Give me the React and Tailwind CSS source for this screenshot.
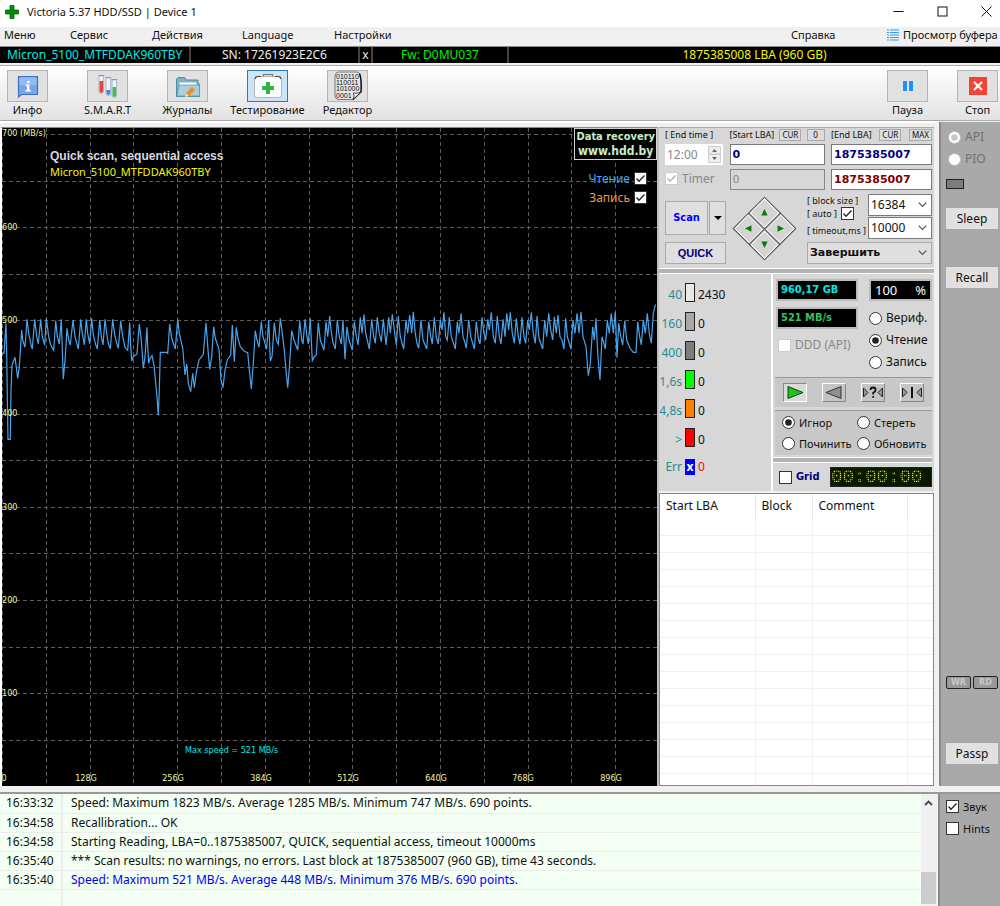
import { useState } from 'react';
import clsx from 'clsx';

// Speed trace, stored as x,y pairs in thirds of a pixel
const TRACE_LEFT =
  '7,190 12,190 18,100 20,190 22,320 24,448 31,448 33,300 36,225 45,202 48,225 53,265 58,230 65,120 68,150 75,172 81,88 86,130 92,160 97,177 104,88 110,140 115,162 122,88 127,140 134,165 139,85 146,140 152,165 161,181 167,92 172,140 178,162 184,88 187,180 190,268 196,200 201,115 206,150 211,165 219,90 225,140 235,177 242,88 247,130 253,165 259,88 263,130 269,162 275,85 280,135 286,160 292,177 299,90 304,140 309,165 315,88 320,130 325,160 331,177 338,88 344,135 350,160 355,175 362,92 368,140 375,172 383,181 389,98 392,170 395,213 400,200 411,192 418,102 424,150 430,235 435,200 441,112 443,170 446,220 450,205 456,197 462,225 467,280 471,320 475,376 478,300 481,187 500,187 503,190 509,102 515,145 526,177 533,88 538,130 548,175 555,255 560,222 565,280 572,305 578,250 583,293 590,240 597,210 610,193 618,98 624,180 629,238 635,200 641,110 646,145 657,178 663,270 669,293 675,240 682,210 692,195 697,105 703,215 709,112 714,145 721,170 733,184 743,188 748,240 754,297 760,220 766,122 771,150 777,172 784,95 789,140 795,160 800,177 806,90 811,213 816,200 823,98 829,150 835,163 841,85 847,130 853,180 858,240 863,293 869,220 875,122 882,150 893,180 899,92 905,150 909,162 915,88 921,140 925,162 931,85 934,150 937,212 943,200 949,195 955,98 961,150 972,180 978,95 983,140';
const TRACE_RIGHT =
  '-1,78 3,120 8,155 16,177 22,90 28,140 34,162 39,90 45,208 51,110 57,150 67,180 73,95 79,140 84,165 91,82 96,130 102,73 107,130 118,177 125,88 131,140 136,160 142,82 148,130 154,155 160,88 168,165 176,82 181,130 187,73 193,120 199,165 205,78 211,140 221,177 228,90 233,130 239,75 245,130 250,65 256,130 261,160 266,175 273,90 279,150 290,177 296,95 302,140 307,162 313,82 319,140 325,162 331,90 336,120 342,67 347,140 352,150 358,82 364,140 376,177 382,95 387,130 393,70 399,140 404,155 409,175 416,90 422,140 433,177 439,95 445,145 450,162 456,82 462,130 467,150 473,88 478,120 484,67 490,140 496,160 502,78 508,140 513,162 519,88 525,140 530,70 536,120 541,67 547,130 553,160 559,85 565,140 570,163 576,82 582,140 587,160 593,90 598,120 604,67 610,130 616,160 621,78 627,145 638,177 644,90 650,140 656,70 662,120 668,150 673,80 679,130 684,75 690,140 696,150 702,177 707,85 712,140 723,177 729,90 735,130 741,70 747,130 753,65 759,140 768,170 775,257 781,220 788,110 793,150 798,85 803,190 810,270 816,140 826,177 832,92 838,130 844,70 850,130 856,65 861,203 866,100 872,140 878,165 884,92 890,150 900,175 910,187 918,187 923,95 929,140 934,165 940,90 946,130 952,70 958,130 964,160 970,70 976,45 978,45';

const toPoints = (trace, dx) =>
  trace.split(' ').map((p) => {
    const [x, y] = p.split(',').map(Number);
    return `${((x + dx) / 3).toFixed(1)},${(290 + y / 3).toFixed(1)}`;
  });

const SPEED_POINTS = [...toPoints(TRACE_LEFT, 0), ...toPoints(TRACE_RIGHT, 990)].join(' ');

const LOG = [
  ['16:33:32', 'Speed: Maximum 1823 MB/s. Average 1285 MB/s. Minimum 747 MB/s. 690 points.'],
  ['16:34:58', 'Recallibration... OK'],
  ['16:34:58', 'Starting Reading, LBA=0..1875385007, QUICK, sequential access, timeout 10000ms'],
  ['16:35:40', '*** Scan results: no warnings, no errors. Last block at 1875385007 (960 GB), time 43 seconds.'],
  ['16:35:40', 'Speed: Maximum 521 MB/s. Average 448 MB/s. Minimum 376 MB/s. 690 points.', true],
  ['', ''],
];

const LATENCY = [
  { label: '40', count: '2430', box: 'bg-[#e8e8e8]' },
  { label: '160', count: '0', box: 'bg-[#a8a8a8]' },
  { label: '400', count: '0', box: 'bg-[#7c7c7c]' },
  { label: '1,6s', count: '0', box: 'bg-[#00ff00]' },
  { label: '4,8s', count: '0', box: 'bg-[#ff8000]' },
  { label: '>', count: '0', box: 'bg-[#ff0000]' },
];

/* ---------- small controls ---------- */

const CheckBox = ({ id, checked = false, disabled = false, label, className, labelClass }) => (
  <div className={clsx('flex items-center gap-1', className)}>
    <span className="relative flex size-[13px] shrink-0">
      <input
        id={id}
        type="checkbox"
        defaultChecked={checked}
        disabled={disabled}
        aria-label={label ? undefined : id}
        className="peer size-[13px] appearance-none border border-[#333] bg-white disabled:border-[#ccc]"
      />
      <svg viewBox="0 0 13 13" className="pointer-events-none absolute inset-0 hidden text-[#222] peer-checked:block peer-disabled:text-[#b0b0b0]">
        <path d="M2.5 6.5 L5 9.2 L10.5 3.5" fill="none" stroke="currentColor" strokeWidth="1.3" />
      </svg>
    </span>
    {label && <label htmlFor={id} className={labelClass}>{label}</label>}
  </div>
);

const Radio = ({ id, name, checked = false, disabled = false, label, className }) => (
  <div className={clsx('flex items-center gap-1', className)}>
    <span className="relative flex size-[13px] shrink-0">
      <input
        id={id}
        type="radio"
        name={name}
        defaultChecked={checked}
        disabled={disabled}
        className="peer size-[13px] appearance-none rounded-full border border-[#333] bg-white disabled:border-[#bbb]"
      />
      <svg viewBox="0 0 13 13" className="pointer-events-none absolute inset-0 hidden text-[#222] peer-checked:block peer-disabled:text-[#c8c8c8]">
        <circle cx="6.5" cy="6.5" r="3.3" fill="currentColor" />
      </svg>
    </span>
    <label htmlFor={id} className="whitespace-nowrap">{label}</label>
  </div>
);

const SelectBox = ({ label, value, className }) => (
  <div className={clsx('relative flex h-[22px] items-center', className)}>
    <select aria-label={label} className="size-full appearance-none truncate pl-0.5 outline-none">
      <option>{value}</option>
    </select>
    <svg viewBox="0 0 9 6" className="pointer-events-none absolute right-1 h-1.5 w-[9px]">
      <path d="M0.7 0.7 L4.5 4.5 L8.3 0.7" fill="none" stroke="#555" strokeWidth="1.2" />
    </svg>
  </div>
);

const Splitter = () => <div className="h-1.5 shrink-0 border-y border-white bg-[#b4b4b4]"></div>;

/* ---------- toolbar ---------- */

const InfoIcon = () => (
  <svg viewBox="0 0 32 26" className="h-[26px] w-8">
    <path d="M6.5 3.5 H25.5 V21.5 H9.5 L6.5 24 Z" fill="#7aa7ea" stroke="#3d70bd" strokeWidth="1.2" />
    <path d="M7.5 4.5 H24.5 V12 H7.5 Z" fill="#94baf2" />
    <path d="M15 8 H17.6 V10 H15 Z M13.6 11.4 H17.4 V17 H18.8 V18.5 H13.4 V17 H15 V13 H13.6 Z" fill="#fff" />
  </svg>
);

const TubesIcon = () => (
  <svg viewBox="0 0 32 26" className="h-[26px] w-8">
    {[[7, 2.5, '#e8453c', 8], [14, 4.5, '#3a86e0', 17], [20, 6.5, '#3fc04a', 14]].map(([x, y, fill, level]) => (
      <g key={x}>
        <rect x={x} y={y} width="4.6" height="18" rx="2.3" fill="#eef3fa" stroke="#98a8c4" strokeWidth="0.8" />
        <path d={`M${x + 0.5} ${level} H${x + 4.1} V${y + 15.6} A1.8 1.8 0 0 1 ${x + 0.5} ${y + 15.6} Z`} fill={fill} />
        <path d={`M${x - 0.6} ${y} H${x + 5.2}`} stroke="#8496b8" />
      </g>
    ))}
  </svg>
);

const FolderIcon = () => (
  <svg viewBox="0 0 32 26" className="h-[26px] w-8">
    <path d="M4.5 23.5 V6 L6 4.5 H12.5 L14.5 7 H26 V11 H27.5 V23.5 Z" fill="#7fb0c4" stroke="#4f8ba3" />
    <path d="M7.5 9.5 H24.5 V12 H7.5 Z" fill="#fff" />
    <path d="M7 12 H27.5 V23 H5 Z" fill="#a9cfdc" stroke="#5e99b0" strokeWidth="0.8" />
    <path d="M13 24 L14 20 L20 14 L23 17 L17 23 Z" fill="#f58a1f" />
    <path d="M13 24 L14 20 L17 23 Z" fill="#f7dcb8" />
  </svg>
);

const KitIcon = () => (
  <svg viewBox="0 0 32 26" className="h-[26px] w-8">
    <path d="M11.5 4 V1.5 H20.5 V4" fill="none" stroke="#777" strokeWidth="1.2" />
    <rect x="2.5" y="3.5" width="27" height="21" rx="3" fill="#fdfdfd" stroke="#b4b4b4" />
    <path d="M3 6 L4 4 L6 3.5 H9 M23 3.5 H26 L28 4 L29 6" fill="none" stroke="#444" strokeWidth="1.2" />
    <path d="M14 9 H18 V13 H22 V17 H18 V21 H14 V17 H10 V13 H14 Z" fill="#2fb344" />
  </svg>
);

const BinaryIcon = () => (
  <svg viewBox="0 0 30 30" className="h-[30px] w-[30px]">
    <path d="M5 1 H24 Q27.5 1.5 28 7 V21 L20 28.5 H5 Q2 28 2 24 V5 Q2.5 1.5 5 1 Z" fill="#e6e6e6" stroke="#777" />
    <path d="M26.5 2.5 Q29 10 28 21 L20 28.5" fill="none" stroke="#111" strokeWidth="1.4" />
    <g fontFamily="Liberation Sans, sans-serif" fontSize="7" fill="#111">
      <text x="3" y="7.6">010110</text>
      <text x="3" y="14">110011</text>
      <text x="3" y="20.4">101000</text>
      <text x="3" y="26.6">0001</text>
    </g>
    <path d="M28 21 L20 28.5 Q22 25 20.5 22 Q24 23 28 21 Z" fill="#fff" stroke="#222" strokeWidth="0.8" />
  </svg>
);

const PauseIcon = () => (
  <svg viewBox="0 0 12 12" className="size-3">
    <path d="M1 1 H5 V11 H1 Z M7 1 H11 V11 H7 Z" fill="#1e90ff" />
  </svg>
);

const StopIcon = () => (
  <svg viewBox="0 0 18 18" className="size-[18px]">
    <rect width="18" height="18" fill="#f44336" />
    <path d="M5 5 L13 13 M13 5 L5 13" stroke="#fff" strokeWidth="2.2" />
  </svg>
);

const ToolButton = ({ label, active, children }) => (
  <button type="button" className="flex w-[41px] flex-col items-center">
    <span
      className={clsx(
        'flex h-8 w-[41px] shrink-0 items-center justify-center overflow-hidden border',
        active ? 'border-[#2a7ab8] bg-[#cce4f7]' : 'border-[#b4b4b4] bg-[#e1e1e1]'
      )}
    >
      {children}
    </span>
    <span className="whitespace-nowrap text-[11px] leading-4">{label}</span>
  </button>
);

/* ---------- graph ---------- */

const GRID_X = Array.from({ length: 15 }, (_, i) => Math.round(2 + i * 43.8) + 0.5);
const GRID_Y = Array.from({ length: 14 }, (_, i) => Math.round(134 + i * 46.6) + 0.5);

const Graph = () => (
  <section className="relative min-w-0 flex-1 overflow-hidden border-l-2 border-t border-[#888] border-l-white bg-black">
    <svg viewBox="2 128 655 657" preserveAspectRatio="xMinYMin meet" className="block size-full">
      <g stroke="#5c5c5c" strokeWidth="1" strokeDasharray="4 3">
        {GRID_X.map((x) => <line key={x} x1={x} x2={x} y1="128" y2="785" />)}
        {GRID_Y.map((y) => <line key={y} x1="2" x2="657" y1={y} y2={y} />)}
      </g>
      <polyline points={SPEED_POINTS} fill="none" stroke="#48a4ec" strokeWidth="1.2" />
      <g fontFamily="DejaVu Sans Condensed, DejaVu Sans, sans-serif" fontSize="9" fill="#f4f4a0">
        <rect x="2" y="129" width="44" height="9" fill="#000" />
        <text x="2" y="136">700 (MB/s)</text>
        {[600, 500, 400, 300, 200, 100].map((v, i) => (
          <text key={v} x="2" y={230 + Math.round(i * 93.2)}>{v}</text>
        ))}
        {['0', '128G', '256G', '384G', '512G', '640G', '768G', '896G'].map((v, i) => (
          <text key={v} x={i ? Math.round(85.5 + (i - 1) * 87.5) : 4} y="781" textAnchor="middle">{v}</text>
        ))}
        <text x="185" y="753" fill="#00e8e8">Max speed = 521 MB/s</text>
      </g>
    </svg>

    {/* Captions over the plot */}
    <div className="absolute left-12 top-5 leading-4">
      <h2 className="font-['Liberation_Sans',sans-serif] text-[12px] font-bold text-[#d8d8e0]">Quick scan, sequential access</h2>
      <p className="text-[11px] text-[#f4f400]">Micron_5100_MTFDDAK960TBY</p>
    </div>
    <div className="absolute right-0 top-0 flex flex-col items-end">
      <a href="#hdd" className="border border-[#d0d0d0] bg-black px-px text-center font-['DejaVu_Sans_Condensed','DejaVu_Sans',sans-serif] font-bold text-[#c8ecc8]">
        <span className="block text-[11px] leading-[15px]">Data recovery</span>
        <span className="block text-[12px] leading-[15px]">www.hdd.by</span>
      </a>
      <div className="mr-2.5 mt-3 flex flex-col items-end gap-1.5 leading-[13px]">
        <CheckBox id="plot-read" checked label="Чтение" className="flex-row-reverse" labelClass="text-[#48a4ec]" />
        <CheckBox id="plot-write" checked label="Запись" className="flex-row-reverse" labelClass="text-[#e89c58]" />
      </div>
    </div>
  </section>
);

/* ---------- scan parameters ---------- */

const MiniButton = ({ children }) => (
  <button type="button" className="h-3 min-w-[18px] border border-[#aaa] bg-[#dcdcdc] px-0.5 text-[8px] leading-[10px]">{children}</button>
);

const ARROWS = [
  ['Up', 'M5 1 L9 9 H1 Z'],
  ['Right', 'M9 5 L1 1 V9 Z'],
  ['Left', 'M1 5 L9 1 V9 Z'],
  ['Down', 'M5 9 L9 1 H1 Z'],
];

const ScanPanel = () => {
  const [startLba, setStartLba] = useState('0');
  const [endLba, setEndLba] = useState('1875385007');

  return (
    <div className="border-t border-[#aaa] bg-[#d7d7d7] pb-1 pl-1.5 pr-0.5">
      <div className="grid grid-cols-[58px_95px_101px] justify-between gap-y-0.5">
        <span className="whitespace-nowrap text-[9px] leading-[14px]">[ End time ]</span>
        <div className="flex items-center justify-between">
          <label htmlFor="start-lba" className="text-[9px] leading-[14px]">[Start LBA]</label>
          <MiniButton>CUR</MiniButton>
          <MiniButton>0</MiniButton>
        </div>
        <div className="flex items-center justify-between">
          <label htmlFor="end-lba" className="text-[9px] leading-[14px]">[End LBA]</label>
          <MiniButton>CUR</MiniButton>
          <MiniButton>MAX</MiniButton>
        </div>

        <div className="flex h-[21px] items-center justify-between bg-white px-0.5">
          <input aria-label="End time" disabled defaultValue="12:00" className="w-9 text-[#888]" />
          <svg viewBox="0 0 13 17" className="h-[17px] w-[13px]">
            <path d="M0.5 0.5 H12.5 V8 H0.5 Z M0.5 8.5 H12.5 V16.5 H0.5 Z" fill="#eee" stroke="#ccc" />
            <path d="M4 6 L6.5 3 L9 6 Z M4 11 L6.5 14 L9 11 Z" fill="#666" />
          </svg>
        </div>
        <input id="start-lba" value={startLba} onChange={(e) => setStartLba(e.target.value)}
          className="h-[21px] min-w-0 border border-[#7a7a7a] bg-white px-0.5 font-['DejaVu_Sans',sans-serif] text-[11px] font-bold text-[#000080]" />
        <input id="end-lba" value={endLba} onChange={(e) => setEndLba(e.target.value)}
          className="h-[21px] min-w-0 border border-[#7a7a7a] bg-white px-0.5 font-['DejaVu_Sans',sans-serif] text-[11px] font-bold text-[#000080]" />

        <CheckBox id="timer" checked disabled label="Timer" className="text-[#888]" />
        <input aria-label="Current start" disabled defaultValue="0"
          className="mt-0.5 h-[21px] min-w-0 border border-[#888] bg-[#d7d7d7] px-0.5 font-['DejaVu_Sans',sans-serif] text-[11px] text-[#888]" />
        <input aria-label="Current end" readOnly value="1875385007"
          className="mt-0.5 h-[21px] min-w-0 border border-[#7a7a7a] bg-white px-0.5 font-['DejaVu_Sans',sans-serif] text-[11px] font-bold text-[#800000]" />
      </div>

      <div className="mt-1 flex min-h-[70px] justify-between">
        <div className="flex w-[61px] flex-col justify-between pt-[7px]">
          <div className="flex gap-px">
            <button type="button" className="h-[34px] flex-1 border border-[#aaa] bg-[#dfdfdf] font-['DejaVu_Sans_Condensed','DejaVu_Sans',sans-serif] text-[11px] font-bold text-[#0000ff]">Scan</button>
            <button type="button" aria-label="Scan options" className="flex h-[34px] w-[17px] items-center justify-center border border-[#aaa] bg-[#dfdfdf]">
              <svg viewBox="0 0 8 4" className="h-1 w-2"><path d="M0 0 H8 L4 4 Z" /></svg>
            </button>
          </div>
          <button type="button" className="h-[22px] border border-[#aaa] bg-[#dfdfdf] font-['Liberation_Sans',sans-serif] text-[11px] font-bold text-[#000080]">QUICK</button>
        </div>

        {/* Direction pad */}
        <div className="mr-1 mt-0.5 flex size-[64px] items-center justify-center">
          <div className="grid size-[45px] rotate-45 grid-cols-2 gap-0.5 border border-[#444] bg-[#777]">
            {ARROWS.map(([name, d]) => (
              <button key={name} type="button" aria-label={name} className="flex items-center justify-center border border-[#f4f4f4] bg-[#d4d4d4]">
                <svg viewBox="0 0 10 10" className="size-2 -rotate-45"><path d={d} fill="#0a7a0a" /></svg>
              </button>
            ))}
          </div>
        </div>

        <div className="flex w-[125px] flex-col justify-between">
          <div className="flex justify-between">
            <div className="whitespace-nowrap text-[9px] leading-[13px]">
              <div>[ block size ]</div>
              <CheckBox id="auto-size" checked label="[ auto ]" className="w-fit flex-row-reverse" />
              <div className="mt-1">[ timeout,ms ]</div>
            </div>
            <div className="flex w-16 flex-col gap-px">
              <SelectBox label="Block size" value="16384" className="border border-[#7a7a7a] bg-white" />
              <SelectBox label="Timeout" value="10000" className="border border-[#7a7a7a] bg-white" />
            </div>
          </div>
          <SelectBox label="When finished" value="Завершить" className="border border-[#aaa] bg-[#dfdfdf] font-['DejaVu_Sans',sans-serif] text-[11px] font-bold" />
        </div>
      </div>
    </div>
  );
};

/* ---------- progress and actions ---------- */

const PLAYER = [
  ['Forward', <path key="f" d="M4 2.5 L19 8.5 L4 14.5 Z" fill="#1ec41e" stroke="#1a3a1a" />],
  ['Backward', <path key="b" d="M18 2.5 L3 8.5 L18 14.5 Z" fill="#909090" stroke="#333" />],
  ['Random', <g key="r"><path d="M1.5 4 L6 8.5 L1.5 13 Z M20.5 4 L16 8.5 L20.5 13 Z" fill="#999" stroke="#222" /><path d="M8.5 6 Q8.5 3.5 11 3.5 Q13.6 3.5 13.6 6 Q13.6 7.5 11.2 8.8 V10.4 M11.2 12 V13.8" fill="none" stroke="#111" strokeWidth="1.8" /></g>],
  ['Butterfly', <g key="u"><path d="M1.5 4 L6 8.5 L1.5 13 Z M20.5 4 L16 8.5 L20.5 13 Z" fill="#999" stroke="#222" /><path d="M11 3 V14" stroke="#111" strokeWidth="2" /></g>],
];

const Progress = () => (
  <div className="flex shrink-0 bg-[#d7d7d7]">
    <ul className="w-[114px] border-r-2 border-white pb-2.5 pt-1">
      {LATENCY.map(({ label, count, box }) => (
        <li key={label} className="flex h-[29px] items-center gap-[3px]">
          <span className="w-[23px] pt-1 text-right text-[#2a8a90]">{label}</span>
          <span className={clsx('h-[19px] w-2.5 border border-[#222]', box)}></span>
          <span className="pt-1">{count}</span>
        </li>
      ))}
      <li className="flex h-[29px] items-center gap-[3px]">
        <span className="w-[23px] text-right text-[#2a8a90]">Err</span>
        <span className="flex h-4 w-2.5 items-center justify-center bg-[#0000ff] font-bold text-white">x</span>
        <span className="text-[#ff0000]">0</span>
      </li>
    </ul>

    <div className="flex min-w-0 flex-1 flex-col pr-0.5 pt-[5px]">
      <div className="flex justify-between pl-[3px]">
        <div className="flex w-[82px] flex-col gap-1.5">
          <output className="h-[22px] border-2 border-[#bbb] bg-black px-[3px] font-['DejaVu_Sans_Condensed','DejaVu_Sans',sans-serif] text-[11px] font-bold leading-[18px] text-[#00e8e8]">960,17 GB</output>
          <output className="h-[22px] border-2 border-[#bbb] bg-black px-[3px] font-['DejaVu_Sans_Condensed','DejaVu_Sans',sans-serif] text-[11px] font-bold leading-[18px] text-[#38c060]">521 MB/s</output>
          <CheckBox id="ddd" disabled label="DDD (API)" className="mt-0.5 pl-0.5 text-[#888]" labelClass="whitespace-nowrap" />
        </div>
        <div className="w-[63px]">
          <output className="flex h-[22px] justify-between border-2 border-[#bbb] bg-black px-1 text-[13px] leading-[18px] text-white">
            <span>100</span><span>%</span>
          </output>
          <div className="mt-2 flex flex-col gap-1">
            <Radio id="mode-verify" name="mode" label="Вериф." className="h-[18px]" />
            <Radio id="mode-read" name="mode" checked label="Чтение" className="h-[18px]" />
            <Radio id="mode-write" name="mode" label="Запись" className="h-[18px]" />
          </div>
        </div>
      </div>

      <div className="ml-0.5 mt-1.5 flex h-[30px] items-center justify-between border-t border-[#999] bg-[#c8c8c8] pl-2 pr-2">
        {PLAYER.map(([name, icon], i) => (
          <button key={name} type="button" aria-label={name}
            className={clsx('h-[19px] w-6 border', i ? 'border-white border-b-[#888] border-r-[#888] bg-[#c4c4c4]' : 'border-[#888] border-b-white border-r-white bg-[#dadada]')}>
            <svg viewBox="0 0 22 17" className="h-[17px] w-[22px]">{icon}</svg>
          </button>
        ))}
      </div>

      <div className="mb-0.5 ml-0.5 mt-[3px] grid grid-cols-2 border-t border-[#999] bg-[#c8c8c8] pb-px pl-[7px] pt-px text-[11px]">
        <Radio id="act-ignore" name="action" checked label="Игнор" className="h-[21px]" />
        <Radio id="act-erase" name="action" label="Стереть" className="h-[21px]" />
        <Radio id="act-fix" name="action" label="Починить" className="h-[21px]" />
        <Radio id="act-refresh" name="action" label="Обновить" className="h-[21px]" />
      </div>

      <Splitter />
      <div className="flex flex-1 items-center justify-between pl-1.5">
        <CheckBox id="grid" label="Grid" labelClass="font-['DejaVu_Sans_Condensed','DejaVu_Sans',sans-serif] text-[11px] font-bold text-[#000080]" />
        <output className="relative h-5 w-[102px] overflow-hidden border border-[#222] bg-[#0a1a00] font-['Liberation_Mono',monospace] text-[19px] leading-[19px] text-[#f0f000]">
          00:00:00
          <span className="absolute inset-0 bg-[linear-gradient(to_right,#0a1a00b0_1px,transparent_1px),linear-gradient(to_bottom,#0a1a00b0_1px,transparent_1px)] bg-[size:2px_2px]"></span>
        </output>
      </div>
    </div>
  </div>
);

const DefectTable = () => (
  <div className="min-h-0 flex-1 overflow-hidden border border-[#828790] bg-white">
    <table className="w-full table-fixed border-collapse text-left">
      <thead>
        <tr className="h-6">
          <th className="w-[95px] border-r border-[#e8e8e8] pl-1.5 font-normal">Start LBA</th>
          <th className="w-[57px] border-r border-[#e8e8e8] pl-1.5 font-normal">Block</th>
          <th className="w-[95px] border-r border-[#e8e8e8] pl-1.5 font-normal">Comment</th>
          <th></th>
        </tr>
      </thead>
      <tbody>
        {Array.from({ length: 16 }, (_, i) => (
          <tr key={i} className="h-[17px] border-b border-[#f0f0f0]">
            <td className="border-r border-[#f0f0f0]"></td>
            <td className="border-r border-[#f0f0f0]"></td>
            <td className="border-r border-[#f0f0f0]"></td>
            <td></td>
          </tr>
        ))}
      </tbody>
    </table>
  </div>
);

const SideButton = ({ children, className }) => (
  <button type="button" className={clsx('h-[21px] w-full bg-[#e1e1e1]', className)}>{children}</button>
);

/* ---------- window ---------- */

const App = () => {
  return (
    <div className="flex h-screen w-full flex-col overflow-hidden bg-[#f0f0f0] font-['Noto_Sans',sans-serif] text-[12px] leading-4 text-[#111]">
      {/* Title bar */}
      <header className="flex h-[27px] shrink-0 items-center bg-white pb-1 pl-[5px] pr-2">
        <svg viewBox="0 0 14 14" className="size-3.5"><path d="M5 0.5 H9 V5 H13.5 V9 H9 V13.5 H5 V9 H0.5 V5 H5 Z" fill="#0a8a0a" stroke="#056005" strokeWidth="0.8" /></svg>
        <h1 className="ml-2 flex-1 text-[11px]">Victoria 5.37 HDD/SSD | Device 1</h1>
        <div className="flex items-center gap-[33px]">
          <button type="button" aria-label="Minimize"><svg viewBox="0 0 11 11" className="size-[11px]"><path d="M0.5 5.5 H10.5" stroke="#111" /></svg></button>
          <button type="button" aria-label="Maximize"><svg viewBox="0 0 11 11" className="size-[11px]"><rect x="1" y="1" width="9" height="9" fill="none" stroke="#111" /></svg></button>
          <button type="button" aria-label="Close"><svg viewBox="0 0 11 11" className="size-[11px]"><path d="M0.5 0.5 L10.5 10.5 M10.5 0.5 L0.5 10.5" stroke="#111" /></svg></button>
        </div>
      </header>

      {/* Menu */}
      <nav className="flex h-[19px] shrink-0 items-center whitespace-nowrap pb-[3px] pl-1 text-[11px]">
        <a href="#menu" className="w-[66px]">Меню</a>
        <a href="#service" className="w-[82px]">Сервис</a>
        <a href="#actions" className="w-[90px]">Действия</a>
        <a href="#language" className="w-[92px]">Language</a>
        <a href="#settings" className="flex-1">Настройки</a>
        <a href="#help" className="w-24">Справка</a>
        <a href="#buffer" className="flex w-[113px] items-center gap-1">
          <svg viewBox="0 0 12 12" className="size-3 shrink-0"><path d="M0 1 H2 M3 1 H12 M0 3.5 H2 M3 3.5 H12 M0 6 H2 M3 6 H12 M0 8.5 H2 M3 8.5 H12 M0 11 H2 M3 11 H12" stroke="#2f9bea" strokeWidth="1.2" /></svg>
          Просмотр буфера
        </a>
      </nav>

      {/* Drive passport line */}
      <div className="flex h-[17px] shrink-0 items-center border-t border-[#888] bg-black text-center">
        <span className="w-[191px] border-r-2 border-[#444] pl-[7px] text-left text-[#00e8e8]">Micron_5100_MTFDDAK960TBY</span>
        <span className="w-[169px] border-r-2 border-[#444] text-[#eee]">SN: 17261923E2C6</span>
        <button type="button" className="w-[13px] border-r-2 border-[#444] text-[#eee]">x</button>
        <span className="w-[136px] border-r-2 border-[#444] text-[#00f000]">Fw: D0MU037</span>
        <span className="flex-1 text-[#f4f400]">1875385008 LBA (960 GB)</span>
      </div>

      {/* Toolbar */}
      <div className="mt-0.5 flex h-14 shrink-0 justify-between border-y border-[#aaa] bg-linear-to-b from-white to-[#e2e2e2] pl-[7px] pr-0.5 pt-1">
        <div className="flex gap-[39px]">
          <ToolButton label="Инфо"><InfoIcon /></ToolButton>
          <ToolButton label="S.M.A.R.T"><TubesIcon /></ToolButton>
          <ToolButton label="Журналы"><FolderIcon /></ToolButton>
          <ToolButton label="Тестирование" active><KitIcon /></ToolButton>
          <ToolButton label="Редактор"><BinaryIcon /></ToolButton>
        </div>
        <div className="flex gap-[29px]">
          <ToolButton label="Пауза"><PauseIcon /></ToolButton>
          <ToolButton label="Стоп"><StopIcon /></ToolButton>
        </div>
      </div>

      {/* Work area */}
      <main className="flex min-h-0 flex-1">
        <div className="flex min-w-0 flex-1 border-t-2 border-white pt-1">
          <Graph />
          <aside className="flex w-[282px] shrink-0 flex-col border-l-2 border-[#c0c0c0] pr-[5px]">
            <ScanPanel />
            <Splitter />
            <Progress />
            <div className="h-0.5 shrink-0"></div>
            <DefectTable />
          </aside>
        </div>
        <aside className="mt-px flex w-[61px] shrink-0 flex-col border-l-2 border-[#888] bg-[#a9a9a9] pb-[22px] pl-[5px] pr-0.5 pt-[5px]">
          <div className="flex flex-col gap-0.5 pl-0.5 text-[#707070]">
            <Radio id="api" name="access" checked disabled label="API" className="h-5" />
            <Radio id="pio" name="access" disabled label="PIO" className="h-5" />
          </div>
          <span className="mt-2.5 h-2.5 w-[18px] shrink-0 border border-[#222] bg-[#7c7c7c]"></span>
          <SideButton className="mt-[19px]">Sleep</SideButton>
          <SideButton className="mt-[38px]">Recall</SideButton>
          <div className="mt-auto flex justify-between font-['DejaVu_Sans_Condensed','DejaVu_Sans',sans-serif] text-[9px] font-bold leading-[11px] text-[#c8c8c8]">
            <span className="w-[25px] rounded-xs border border-[#222] bg-[#999] text-center">WR</span>
            <span className="w-[25px] rounded-xs border border-[#222] bg-[#999] text-center">RD</span>
          </div>
          <SideButton className="mt-[54px]">Passp</SideButton>
        </aside>
      </main>

      {/* Log */}
      <footer className="mt-1.5 flex h-[114px] shrink-0 border-t-2 border-[#999]">
        <div className="min-w-0 flex-1 overflow-hidden bg-[#f2fff2]">
          <table className="w-full border-collapse">
            <tbody>
              {LOG.map(([time, text, blue], i) => (
                <tr key={i} className="h-[19px] border-b border-[#ececec]">
                  <td className="w-[62px] border-r-2 border-[#ececec] pl-1.5">{time}</td>
                  <td className={clsx('pl-2', blue && 'text-[#0000f0]')}>{text}</td>
                </tr>
              ))}
            </tbody>
          </table>
        </div>
        <div className="flex w-[15px] flex-col items-center bg-[#f0f0f0]">
          <svg viewBox="0 0 9 6" className="mt-1.5 h-1.5 w-[9px]"><path d="M1 5 L4.5 1.5 L8 5" fill="none" stroke="#444" strokeWidth="1.8" /></svg>
          <div className="mb-0.5 mt-auto h-8 w-full bg-[#cdcdcd]"></div>
        </div>
        <div className="ml-0.5 flex w-[62px] flex-col gap-[9px] border-l-2 border-[#888] bg-[#a9a9a9] pl-1.5 pt-1.5 text-[11px] leading-[13px]">
          <CheckBox id="sound" checked label="Звук" />
          <CheckBox id="hints" label="Hints" />
        </div>
      </footer>
    </div>
  );
};

export default App;
